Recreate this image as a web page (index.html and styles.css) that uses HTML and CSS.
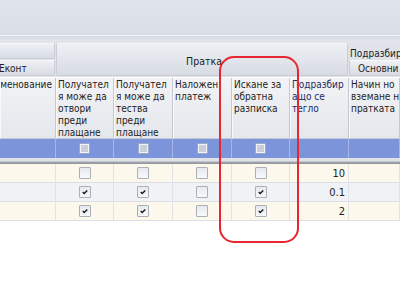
FILE: index.html
```html
<!DOCTYPE html>
<html>
<head>
<meta charset="utf-8">
<link rel="stylesheet" href="styles.css">
</head>
<body>
<div class="page">
  <div class="top"></div>
  <div class="gap"></div>
  <div class="bands">
    <div class="band c0 r1"></div>
    <div class="band c0 r2"><span class="econt">Еконт</span></div>
    <div class="band pratka">Пратка</div>
    <div class="band c6 r1 plain"><span>Подразбиране</span></div>
    <div class="band c6 r2 sub"><span>Основни</span></div>
  </div>
  <div class="row hdr">
    <div class="cell"><span class="name">Наименование</span></div>
    <div class="cell">Получател<br>я може да<br>отвори<br>преди<br>плащане</div>
    <div class="cell">Получател<br>я може да<br>тества<br>преди<br>плащане</div>
    <div class="cell">Наложен<br>платеж</div>
    <div class="cell">Искане за<br>обратна<br>разписка</div>
    <div class="cell navy">Подразбир<br>ащо се<br>тегло</div>
    <div class="cell">Начин но<br>вземане на<br>пратката</div>
  </div>
  <div class="row filter">
    <div class="cell"></div>
    <div class="cell"><i class="fbox"></i></div>
    <div class="cell"><i class="fbox"></i></div>
    <div class="cell"><i class="fbox"></i></div>
    <div class="cell"><i class="fbox"></i></div>
    <div class="cell"></div>
    <div class="cell"></div>
  </div>
  <div class="sep"></div>
  <div class="row data odd">
    <div class="cell"></div>
    <div class="cell"><i class="cb"></i></div>
    <div class="cell"><i class="cb"></i></div>
    <div class="cell"><i class="cb"></i></div>
    <div class="cell"><i class="cb"></i></div>
    <div class="cell num">10</div>
    <div class="cell"></div>
  </div>
  <div class="row data even">
    <div class="cell"></div>
    <div class="cell"><i class="cb"><svg viewBox="0 0 11 11"><path d="M3 5.5 L4.6 7.2 L8 3.8"/></svg></i></div>
    <div class="cell"><i class="cb"><svg viewBox="0 0 11 11"><path d="M3 5.5 L4.6 7.2 L8 3.8"/></svg></i></div>
    <div class="cell"><i class="cb"></i></div>
    <div class="cell"><i class="cb"><svg viewBox="0 0 11 11"><path d="M3 5.5 L4.6 7.2 L8 3.8"/></svg></i></div>
    <div class="cell num">0.1</div>
    <div class="cell"></div>
  </div>
  <div class="row data odd">
    <div class="cell"></div>
    <div class="cell"><i class="cb"><svg viewBox="0 0 11 11"><path d="M3 5.5 L4.6 7.2 L8 3.8"/></svg></i></div>
    <div class="cell"><i class="cb"><svg viewBox="0 0 11 11"><path d="M3 5.5 L4.6 7.2 L8 3.8"/></svg></i></div>
    <div class="cell"><i class="cb"></i></div>
    <div class="cell"><i class="cb"><svg viewBox="0 0 11 11"><path d="M3 5.5 L4.6 7.2 L8 3.8"/></svg></i></div>
    <div class="cell num">2</div>
    <div class="cell"></div>
  </div>
  <div class="highlight"></div>
</div>
</body>
</html>
```
FILE: styles.css
```css
html, body {
  margin: 0;
  padding: 0;
  background: #ffffff;
}
.page {
  position: relative;
  width: 400px;
  height: 305px;
  overflow: hidden;
  font-family: "DejaVu Sans Condensed", "DejaVu Sans", sans-serif;
  font-size: 10px;
  color: #1e1e1e;
}
.top {
  height: 35px;
  background: linear-gradient(#e0e4eb, #d9dee6);
  border-bottom: 1px solid #f3f5f8;
}
.gap {
  height: 6px;
  background: linear-gradient(#d6dbe3, #e3e6ec);
}
.bands {
  display: grid;
  grid-template-columns: 55px 292px 1fr;
  grid-template-rows: 16px 16px;
  column-gap: 1px;
  row-gap: 1px;
  padding: 1px 0 1px 0;
  background: #dfe3e9;
}
.band {
  background: linear-gradient(#eef0f4, #d7dbe3);
  border: 1px solid #c8cdd6;
  border-top-color: #f7f8fa;
  border-radius: 2px;
  box-sizing: border-box;
  display: flex;
  align-items: center;
  overflow: hidden;
  white-space: nowrap;
}
.c0 { grid-column: 1; border-left: none; border-radius: 0 2px 2px 0; }
.r1 { grid-row: 1; }
.r2 { grid-row: 2; }
.c6 { grid-column: 3; border-right: none; border-radius: 2px 0 0 2px; }
.pratka {
  grid-column: 2;
  grid-row: 1 / span 2;
  justify-content: center;
  padding-left: 4px;
  padding-top: 2px;
  font-size: 10.5px;
}
.econt { margin-left: -1px; }
.plain {
  background: #dfe3e9;
  border: none;
  padding-left: 1px;
  align-items: flex-end;
}
.sub span { padding-left: 8px; }
.row {
  display: grid;
  grid-template-columns: 56px 58px 59px 59px 58px 59px 1fr;
}
.cell {
  box-sizing: border-box;
  border-right: 1px solid #c9ced6;
  overflow: hidden;
}
.hdr {
  height: 61px;
  margin-top: 1px;
}
.hdr .cell {
  background: linear-gradient(#f2f3f6, #e4e7ec);
  border-right-color: #c3c8d1;
  border-bottom: 1px solid #c3c8d1;
  border-left: 1px solid #f8f9fb;
  padding: 1px 0 0 1px;
  line-height: 12px;
  white-space: nowrap;
}
.hdr .navy { color: #1d2b66; }
.name { display: inline-block; margin-left: -20px; }
.filter {
  height: 19px;
  background: #7c95da;
}
.filter .cell {
  border-right-color: #a7b6e6;
  display: flex;
  align-items: center;
  justify-content: center;
}
.fbox {
  width: 9px;
  height: 9px;
  box-sizing: border-box;
  border: 1px solid #f1f3f8;
  background: #c9ced8;
  box-shadow: 0 0 0 1px #9aa7cf;
}
.sep {
  height: 6px;
  background: linear-gradient(#dfe2e7 0, #dfe2e7 3px, #a3a8b0 4px, #8d939c 6px);
}
.data {
  height: 19px;
  border-bottom: 1px solid #dce0e6;
  box-sizing: border-box;
}
.data .cell {
  border-right-color: #e0e3e8;
  display: flex;
  align-items: center;
  justify-content: center;
}
.odd { background: #fdf8ec; }
.even { background: #f0f2f5; }
.data .num {
  justify-content: flex-end;
  padding-right: 3px;
  font-size: 11px;
  color: #222;
}
.cb {
  position: relative;
  width: 12px;
  height: 12px;
  box-sizing: border-box;
  border: 1px solid #a9b0bb;
  background: linear-gradient(#e6e9ee, #f8f9fa);
  border-radius: 1px;
  display: flex;
}
.cb svg {
  width: 10px;
  height: 10px;
  fill: none;
  stroke: #1b1b1b;
  stroke-width: 1.6;
}
.highlight {
  position: absolute;
  left: 219px;
  top: 56px;
  width: 80px;
  height: 187px;
  box-sizing: border-box;
  border: 2px solid #e8262f;
  border-radius: 15px;
}
```
